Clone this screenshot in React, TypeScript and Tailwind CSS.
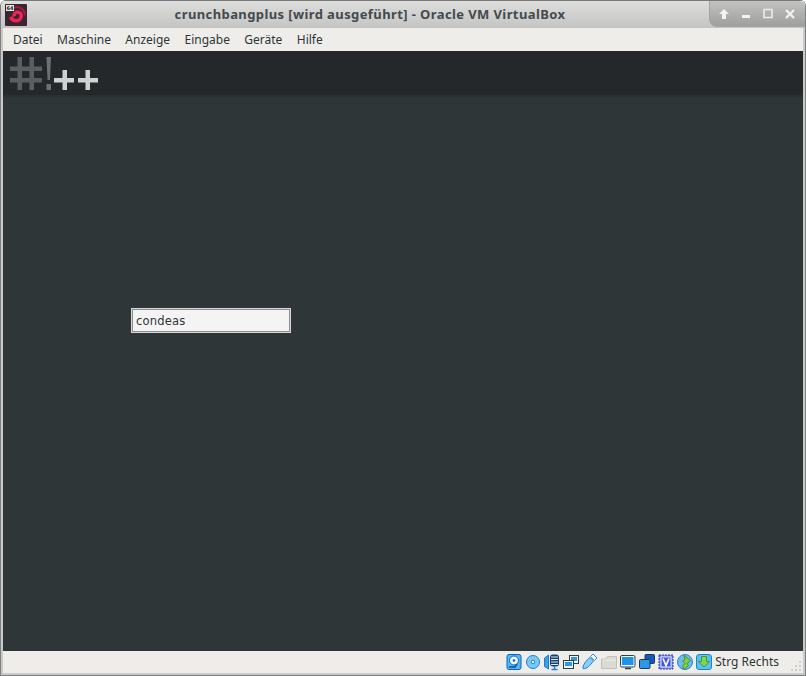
import type { ReactNode } from 'react'

const menus = ['Datei', 'Maschine', 'Anzeige', 'Eingabe', 'Geräte', 'Hilfe']

function Icon({ children }: { children: ReactNode }) {
  return (
    <svg width="16" height="18" viewBox="0 0 16 18" className="shrink-0">
      {children}
    </svg>
  )
}

function StatusIcons() {
  return (
    <div className="flex items-center gap-[3px]">
      {/* hard disk */}
      <Icon>
        <rect x="1" y="1.500" width="14" height="15" rx="2" fill="#55b4f2" stroke="#0a64c4" />
        <circle cx="8" cy="7.500" r="4.500" fill="#eef7fd" stroke="#0a64c4" />
        <circle cx="8" cy="7.500" r="1.300" fill="#0a64c4" />
        <path d="M3 14h6l2-3" fill="none" stroke="#0a4f9e" strokeWidth="1.400" />
      </Icon>
      {/* optical */}
      <Icon>
        <circle cx="8" cy="9" r="6.500" fill="#7cc8f5" stroke="#1a82d8" />
        <circle cx="8" cy="9" r="1.800" fill="#f2fafe" stroke="#1a82d8" />
      </Icon>
      {/* audio */}
      <Icon>
        <path d="M0.500 5 4.500 2v14l-4-2.500z" fill="#36a0ec" stroke="#0a64c4" strokeWidth=".8" />
        <rect x="6" y="1.500" width="9" height="12" rx="3" fill="#123f73" />
        <path d="M7 4h7M7 6.500h7M7 9h7M7 11.500h7" stroke="#e2f0fa" />
        <path d="M10.500 13v3M7.500 16.500h6" stroke="#1a82d8" strokeWidth="1.400" />
      </Icon>
      {/* network */}
      <Icon>
        <rect x="6.500" y="2.500" width="9" height="8" fill="#f4f7f9" stroke="#2f3d48" />
        <rect x="8" y="4" width="6" height="4" fill="#2a97e8" />
        <rect x="0.500" y="7.500" width="10" height="8" fill="#f4f7f9" stroke="#2f3d48" />
        <rect x="2" y="9" width="7" height="4" fill="#2a97e8" />
      </Icon>
      {/* usb */}
      <Icon>
        <path d="M1 15.500c-.5-3 3-8 7-11l3.500 3.500c-3 4-7 8.500-10.500 7.500z" fill="#8dcdf6" stroke="#1a82d8" />
        <path d="M8.500 3.500 11 1l4 4-2.500 2.500z" fill="#f6fafc" stroke="#1a82d8" strokeWidth=".9" />
      </Icon>
      {/* shared folder */}
      <Icon>
        <path d="M0.500 6h4l2-2.500h9V15.500h-15z" fill="#dcdad4" stroke="#c2c0ba" />
        <path d="M1.500 7h13" stroke="#ecebe7" />
      </Icon>
      {/* display */}
      <Icon>
        <rect x="0.500" y="2.500" width="14.500" height="11.500" rx="1.500" fill="#f6f8f9" stroke="#2f3d48" />
        <rect x="2" y="4" width="11.500" height="8" fill="#1a94ee" />
        <path d="M5 15.500h6" stroke="#2f3d48" strokeWidth="1.500" />
      </Icon>
      {/* video capture */}
      <Icon>
        <rect x="6" y="1.500" width="9.500" height="9" rx="1" fill="#0f5cc0" stroke="#24364a" />
        <rect x="0.500" y="6.500" width="10.500" height="9" rx="1" fill="#2a97e8" stroke="#24364a" />
      </Icon>
      {/* vt-x */}
      <Icon>
        <rect x="1" y="2" width="14" height="14" fill="#7c8ee8" stroke="#2a3aa8" strokeDasharray="2 1" />
        <rect x="3" y="4" width="10" height="10" fill="#3f5ad0" stroke="#dfe5fa" />
        <path d="M5 5.500 8 12.500 11 5.500" fill="none" stroke="#f4f6fd" strokeWidth="1.800" />
      </Icon>
      {/* guest additions */}
      <Icon>
        <circle cx="8" cy="9" r="7.500" fill="#6dbcf0" stroke="#2a82cc" />
        <path d="M7 2.500l6.500 5-3.500 3 1.500 2-4.500 4-1.500-3.500 2.500-2.500-2.500-2.500 2.500-1.500z" fill="#84d040" stroke="#2f8a24" strokeWidth=".8" />
      </Icon>
      {/* keyboard capture */}
      <Icon>
        <rect x="0.500" y="1.500" width="15" height="15" rx="2.500" fill="#5cc0f2" stroke="#1a86c8" />
        <path d="M5.500 3.500h5v5h3L8 14 2.500 8.500h3z" fill="#84d648" stroke="#2f8f2a" strokeWidth=".8" />
      </Icon>
    </div>
  )
}

// #!++ logo of the guest login screen
function GuestLogo() {
  return (
    <svg width="100" height="46" viewBox="0 0 100 46" className="block">
      <g fill="#5a5e60">
        <rect x="14.500" y="6" width="4.500" height="33" />
        <rect x="26.500" y="6" width="4.500" height="33" />
        <rect x="7" y="15.500" width="32" height="4.500" />
        <rect x="7" y="27" width="32" height="4.500" />
      </g>
      <g fill="#6c7072">
        <path d="M43.500 6h4.500l-1 23h-2.500z" />
        <rect x="43.500" y="33" width="4.500" height="6" />
      </g>
      <g fill="#d0d2d2">
        <rect x="51" y="27" width="20" height="4.500" />
        <rect x="59.500" y="19" width="4.500" height="20" />
        <rect x="75" y="27" width="20" height="4.500" />
        <rect x="82.500" y="19" width="4.500" height="20" />
      </g>
    </svg>
  )
}

export default function App() {
  return (
    <div className="w-[806px] h-[676px] flex flex-col bg-[#c9c9c7] font-['Noto_Sans',sans-serif] overflow-hidden rounded-t-[6px] border-x border-b border-[#7d7f80]">
      {/* Title bar */}
      <div className="h-[28px] shrink-0 flex items-stretch bg-gradient-to-b from-[#dededc] to-[#c4c4c2] border-t border-[#77797a]">
        <div className="w-[31px] pl-[4px] pt-[3px] shrink-0">
          <div className="relative w-[22px] h-[22px] bg-[#3a2630] overflow-hidden rounded-[1px]">
            <svg width="22" height="22" viewBox="0 0 22 22" fill="none">
              <path
                d="M9.500 12.500c-1-2.500 1-4.500 3-4.500 2.200 0 3.800 1.600 3.800 3.700 0 3-2.500 5-5.300 5-2.500 0-4.500-1.400-5.500-3.700"
                stroke="#ee2452"
                strokeWidth="3.600"
              />
              <path d="M8 4.500c2-1.500 5-2 7.500-.7 3 1.500 4.500 4.500 4.200 7.500" stroke="#a81c42" strokeWidth="2" />
            </svg>
            <span className="absolute left-[1px] top-[1px] w-[8px] h-[6px] bg-[#e8e8e8] text-[5px] leading-[6px] text-center text-[#222] font-bold font-['DejaVu_Sans',sans-serif]">
              64
            </span>
          </div>
        </div>
        <div className="flex-1 flex items-center justify-center pr-[1px] text-[13px] font-bold text-[#444a4e] tracking-[0.4px]">
          crunchbangplus [wird ausgeführt] - Oracle VM VirtualBox
        </div>
        <div className="w-[96px] shrink-0 flex items-center gap-[10px] pl-[8px] mb-[1px] rounded-bl-[8px] rounded-tr-[6px] bg-gradient-to-b from-[#c2c2c0] to-[#9f9f9e] border-l border-b border-[#a4a4a2]">
          <svg width="12" height="12" viewBox="0 0 12 12">
            <path d="M6 1 11 6H8v5H4V6H1z" fill="#f2f2f2" />
          </svg>
          <svg width="12" height="12" viewBox="0 0 12 12">
            <rect x="2" y="7" width="8" height="3" fill="#f2f2f2" />
          </svg>
          <svg width="12" height="12" viewBox="0 0 12 12">
            <rect x="2" y="1.500" width="8" height="8" fill="none" stroke="#ececec" strokeWidth="1.600" />
          </svg>
          <svg width="12" height="12" viewBox="0 0 12 12">
            <path d="M2 2l8 8M10 2l-8 8" stroke="#f2f2f2" strokeWidth="2.400" />
          </svg>
        </div>
      </div>

      {/* Menu bar */}
      <div className="h-[23px] shrink-0 mx-[2px] flex items-center pl-[10px] gap-[14.400px] text-[12px] text-[#2e3436] bg-[#efedea]">
        {menus.map((m) => (
          <span key={m}>{m}</span>
        ))}
      </div>

      {/* Guest screen */}
      <div className="flex-1 flex flex-col mx-[2px] bg-[#2e3638] min-h-0">
        <div className="h-[46px] shrink-0 bg-[#24282a] border-b-2 border-[#2a3032]">
          <GuestLogo />
        </div>
        <div className="flex-1 pl-[128px] pt-[211px]">
          <div className="w-[160px] h-[25px] border-2 border-[#d8d8d8] outline outline-1 -outline-offset-2 outline-[#8c8c8c] bg-[#f4f4f4] flex items-center pl-[3px] pt-[2px] text-[11.500px] tracking-[0.2px] text-[#2e3436] font-['DejaVu_Sans',sans-serif]">
            condeas
          </div>
        </div>
      </div>

      {/* Status bar */}
      <div className="relative h-[22px] shrink-0 mx-[2px] flex items-center justify-end pr-[24px] gap-[3px] text-[12px] text-[#2e3436] bg-[#efedea]">
        <StatusIcons />
        <span>Strg Rechts</span>
        {/* size grip */}
        <svg width="14" height="14" viewBox="0 0 14 14" className="absolute right-0 bottom-0">
          <g fill="#cfcdc9">
            <rect x="10" y="2" width="2" height="2" />
            <rect x="6" y="6" width="2" height="2" />
            <rect x="10" y="6" width="2" height="2" />
            <rect x="2" y="10" width="2" height="2" />
            <rect x="6" y="10" width="2" height="2" />
            <rect x="10" y="10" width="2" height="2" />
          </g>
        </svg>
      </div>
      <div className="h-[2px] shrink-0" />
    </div>
  )
}
